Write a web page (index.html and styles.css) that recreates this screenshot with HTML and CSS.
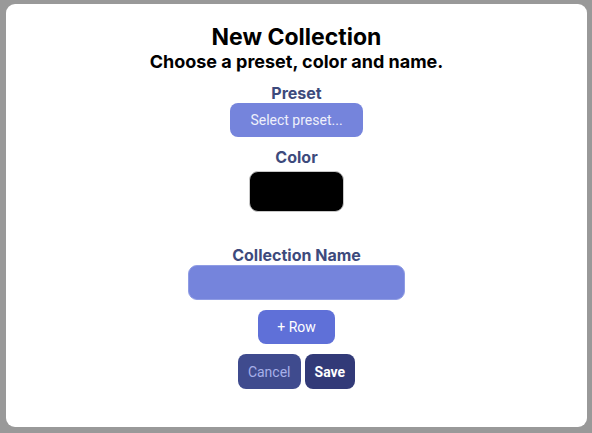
FILE: index.html
```html
<!DOCTYPE html>
<html>
<head>
<meta charset="utf-8">
<link rel="stylesheet" href="styles.css">
</head>
<body>
<div class="modal">
  <h1 class="title">New Collection</h1>
  <h2 class="subtitle">Choose a preset, color and name.</h2>
  <label class="label label-preset">Preset</label>
  <button class="btn btn-preset">Select preset...</button>
  <label class="label label-color">Color</label>
  <div class="swatch"></div>
  <label class="label label-name">Collection Name</label>
  <input class="name-input" type="text">
  <button class="btn btn-row">+ Row</button>
  <div class="actions">
    <button class="btn btn-cancel">Cancel</button>
    <button class="btn btn-save">Save</button>
  </div>
</div>
</body>
</html>
```
FILE: styles.css
```css
html, body {
  margin: 0;
  padding: 0;
}
body {
  background: #999999;
  width: 592px;
  height: 433px;
  box-sizing: border-box;
  padding: 4px 5px 6px 6px;
}
.modal {
  background: #ffffff;
  border-radius: 9px;
  height: 423px;
  box-sizing: border-box;
  padding-top: 19px;
  display: flex;
  flex-direction: column;
  align-items: center;
  font-family: "Inter", "Liberation Sans", sans-serif;
}
.title {
  margin: 0;
  font-size: 23px;
  font-weight: 700;
  color: #000;
  line-height: 28px;
}
.subtitle {
  margin: 0;
  font-size: 18px;
  font-weight: 700;
  color: #000;
  line-height: 22px;
}
.label {
  font-size: 16px;
  font-weight: 700;
  color: #3d4a7c;
  line-height: 19px;
}
.label-preset { margin-top: 11px; }
.label-color { margin-top: 11px; }
.label-name { margin-top: 34px; }
.btn {
  font-family: "Roboto", sans-serif;
  font-size: 14px;
  line-height: 16px;
  border: none;
  border-radius: 8px;
  padding: 9px 10px;
  color: #ffffff;
  cursor: pointer;
}
.btn-preset {
  background: #7584dc;
  color: #eef0fb;
  padding: 9px 20px;
  height: 34px;
}
.swatch {
  margin-top: 4px;
  width: 95px;
  height: 41px;
  box-sizing: border-box;
  background: #000;
  border: 1px solid #c8c8c8;
  border-radius: 9px;
}
.name-input {
  width: 217px;
  height: 35px;
  box-sizing: border-box;
  border: 1px solid #8f9ce4;
  border-radius: 9px;
  background: #7584dc;
  outline: none;
}
.btn-row {
  margin-top: 10px;
  background: #5f70d8;
  padding: 9px 19px;
  height: 34px;
}
.actions {
  margin-top: 10px;
  display: flex;
  gap: 4px;
}
.btn-cancel {
  background: #3f4b8e;
  color: #a7b0ea;
  height: 35px;
}
.btn-save {
  background: #323a78;
  font-weight: 700;
  height: 35px;
}
```
